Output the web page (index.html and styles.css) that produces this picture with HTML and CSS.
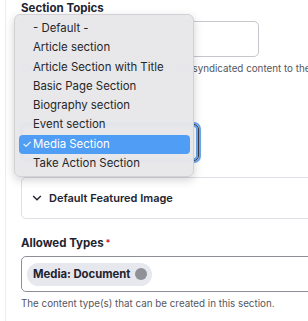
FILE: index.html
```html
<!DOCTYPE html>
<html lang="en">
<head>
  <meta charset="UTF-8" />
  <meta name="viewport" content="width=device-width, initial-scale=1.0"/>
  <title>Section settings</title>
  <link rel="stylesheet" href="styles.css">
</head>
<body>

  <div class="page">
    <div class="field">
      <div class="field-label">Section Topics</div>
      <div class="text-box"></div>
      <div class="field-desc">Choose the topics used to pull in the syndicated content to the section.</div>
    </div>

    <div class="field field-type">
      <div class="select-box"></div>
    </div>

    <div class="details">
      <svg class="chevron" width="10" height="10" viewBox="0 0 10 10"><path d="M1.2 3 L5 6.8 L8.8 3" fill="none" stroke="#222330" stroke-width="1.4"/></svg>
      Default Featured Image
    </div>

    <div class="field field-allowed">
      <div class="field-label">Allowed Types<span class="req">*</span></div>
      <div class="tag-box">
        <span class="chip">Media: Document <span class="chip-x"></span></span>
      </div>
      <div class="field-desc">The content type(s) that can be created in this section.</div>
    </div>

    <ul class="menu">
      <li>- Default -</li>
      <li>Article section</li>
      <li>Article Section with Title</li>
      <li>Basic Page Section</li>
      <li>Biography section</li>
      <li>Event section</li>
      <li class="selected">Media Section</li>
      <li>Take Action Section</li>
    </ul>
  </div>

</body>
</html>
```

FILE: styles.css
```css
body {
  margin: 0;
  background: #fff;
  font-family: 'Inter', 'Liberation Sans', sans-serif;
  color: #222330;
  overflow: hidden;
}
.page {
  position: relative;
  margin-left: 5px;
  border-left: 1px solid #ececf0;
  padding: 1px 0 0 15px;
  min-height: 321px;
  white-space: nowrap;
}
.field-label {
  font-size: 11.5px;
  font-weight: 700;
  line-height: 14px;
}
.req {
  color: #d72222;
  font-size: 9px;
  vertical-align: top;
  margin-left: 2px;
}
.text-box {
  margin-top: 6px;
  width: 236px;
  height: 34px;
  border: 1px solid #c6c7cc;
  border-radius: 5px;
}
.field-desc {
  margin-top: 5px;
  font-size: 9.8px;
  line-height: 14px;
  color: #55565b;
}
.field-type {
  margin-top: 48px;
}
.select-box {
  width: 176px;
  height: 35px;
  border: 1px solid #3b3c44;
  border-radius: 5px;
  box-shadow: 0 0 0 2px #6aa6ee, inset 0 0 0 2px #6aa6ee;
}
.details {
  margin-top: 16px;
  height: 40px;
  width: 300px;
  border: 1px solid #dedfe4;
  border-radius: 5px;
  display: flex;
  align-items: center;
  gap: 7px;
  padding-left: 10px;
  font-size: 11px;
  font-weight: 600;
}
.field-allowed {
  margin-top: 17px;
}
.tag-box {
  margin-top: 6px;
  width: 300px;
  height: 34px;
  border: 1px solid #8e9099;
  border-radius: 5px;
  display: flex;
  align-items: center;
  padding-left: 5px;
}
.chip {
  display: inline-flex;
  align-items: center;
  gap: 5px;
  height: 23px;
  padding: 0 5px 0 6px;
  border-radius: 12px;
  background: #e7e8ee;
  font-size: 11.3px;
  font-weight: 700;
}
.chip-x {
  width: 12px;
  height: 12px;
  border-radius: 50%;
  background: #8f9098;
}
.menu {
  position: absolute;
  left: 8px;
  top: 14px;
  width: 180px;
  margin: 0;
  padding: 4px 0;
  list-style: none;
  background: rgba(232, 232, 235, 0.98);
  border: 1px solid #d2d2d6;
  border-radius: 6px;
  box-shadow: 0 3px 10px rgba(0, 0, 0, 0.18);
  box-sizing: border-box;
  height: 163px;
}
.menu li {
  position: relative;
  margin: 0 3px 0 4px;
  padding-left: 14px;
  height: 19.3px;
  line-height: 19.3px;
  font-size: 11.4px;
  color: #262626;
  border-radius: 4px;
}
.menu li.selected {
  background: #4f9df5;
  color: #fff;
}
.menu li.selected::before {
  content: "✓";
  position: absolute;
  left: 3px;
  font-size: 11px;
}
```
